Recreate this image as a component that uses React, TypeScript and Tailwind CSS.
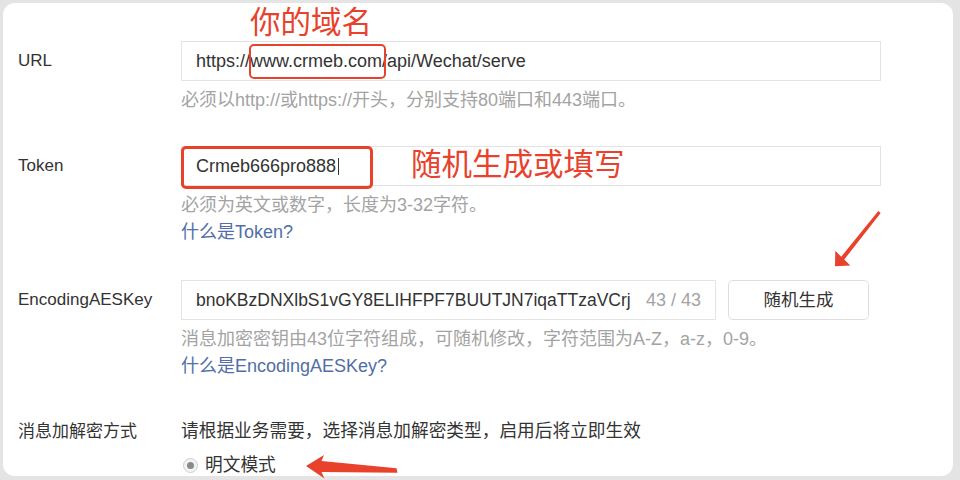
import React from "react"

const RED = "#e8412c"

function Label({ children, leading = "leading-[40px]" }: { children: React.ReactNode; leading?: string }) {
  return <div className={`w-[163px] shrink-0 text-[17px] text-[#333] ${leading}`}>{children}</div>
}

function Help({ children }: { children: React.ReactNode }) {
  return <div className="leading-[27px] text-[#a3a3a3]">{children}</div>
}

function Link({ children }: { children: React.ReactNode }) {
  return <div className="leading-[27px] text-[#516ea8]">{children}</div>
}

export default function App() {
  return (
    <div className="relative w-[960px] h-[480px] bg-[#e4e4e4] pt-[3px] pl-[3px] pr-[7px] pb-[4px] font-['Liberation_Sans','Noto_Sans_CJK_SC',sans-serif] text-[18px]">
      <div className="h-full bg-white rounded-[12px] overflow-hidden pl-[15px] pt-[38px]">
        {/* URL */}
        <div className="flex">
          <Label>URL</Label>
          <div className="w-[700px]">
            <div className="h-[40px] border border-[#e3e3e3] px-[14px] flex items-center text-[#333]">
              https://www.crmeb.com/api/Wechat/serve
            </div>
            <div className="mt-[6px]">
              <Help>必须以http://或https://开头，分别支持80端口和443端口。</Help>
            </div>
          </div>
        </div>

        {/* Token */}
        <div className="flex mt-[32px]">
          <Label>Token</Label>
          <div className="w-[700px]">
            <div className="h-[40px] border border-[#e3e3e3] px-[14px] flex items-center text-[#333]">
              Crmeb666pro888
              <span className="inline-block w-px h-[17px] bg-[#333] ml-[2px]" />
            </div>
            <div className="mt-[6px]">
              <Help>必须为英文或数字，长度为3-32字符。</Help>
              <Link>什么是Token?</Link>
            </div>
          </div>
        </div>

        {/* EncodingAESKey */}
        <div className="flex mt-[34px]">
          <Label>EncodingAESKey</Label>
          <div className="w-[700px]">
            <div className="flex gap-[12px]">
              <div className="w-[535px] h-[40px] border border-[#e3e3e3] px-[14px] flex items-center justify-between text-[#333]">
                <span className="text-[17.5px]">bnoKBzDNXlbS1vGY8ELIHFPF7BUUTJN7iqaTTzaVCrj</span>
                <span className="text-[#a3a3a3]">43 / 43</span>
              </div>
              <button className="w-[141px] h-[40px] border border-[#dedede] rounded-[5px] text-[17.5px] text-[#333] bg-white">
                随机生成
              </button>
            </div>
            <div className="mt-[6px]">
              <Help>消息加密密钥由43位字符组成，可随机修改，字符范围为A-Z，a-z，0-9。</Help>
              <Link>什么是EncodingAESKey?</Link>
            </div>
          </div>
        </div>

        {/* 消息加解密方式 */}
        <div className="flex mt-[38px]">
          <Label leading="leading-[27px]">消息加解密方式</Label>
          <div className="w-[700px] text-[17.7px] text-[#333]">
            <div className="leading-[27px]">请根据业务需要，选择消息加解密类型，启用后将立即生效</div>
            <div className="flex items-center gap-[7px] mt-[7px] leading-[27px]">
              <span className="ml-[2px] w-[15px] h-[15px] rounded-full border border-[#cfcfcf] bg-[#f3f3f3] flex items-center justify-center">
                <span className="w-[7px] h-[7px] rounded-full bg-[#8a8a8a]" />
              </span>
              明文模式
            </div>
          </div>
        </div>
      </div>

      {/* annotations */}
      <div className="absolute left-[250px] top-[4px] text-[30.5px] leading-[36px] text-[#e8412c]">你的域名</div>
      <div className="absolute left-[249px] top-[44px] w-[137px] h-[35px] border-[2.5px] border-[#e8412c] rounded-[5px]" />
      <div className="absolute left-[181px] top-[146px] w-[192px] h-[43px] border-[3px] border-[#e8412c] rounded-[5px]" />
      <div className="absolute left-[411px] top-[146px] text-[30.5px] leading-[36px] text-[#e8412c]">随机生成或填写</div>
      <svg className="absolute left-0 top-0 pointer-events-none" width="960" height="480" viewBox="0 0 960 480">
        <polygon
          fill={RED}
          points="878.3,211 880.7,213 844.2,259.6 850.3,265.6 835,266.3 835.3,250.8 841.2,256.7"
        />
        <polygon
          fill={RED}
          points="306,466 324,455 321.5,461 396.5,468.3 397.5,472.8 321.5,472 324.5,478.5"
        />
      </svg>
    </div>
  )
}
